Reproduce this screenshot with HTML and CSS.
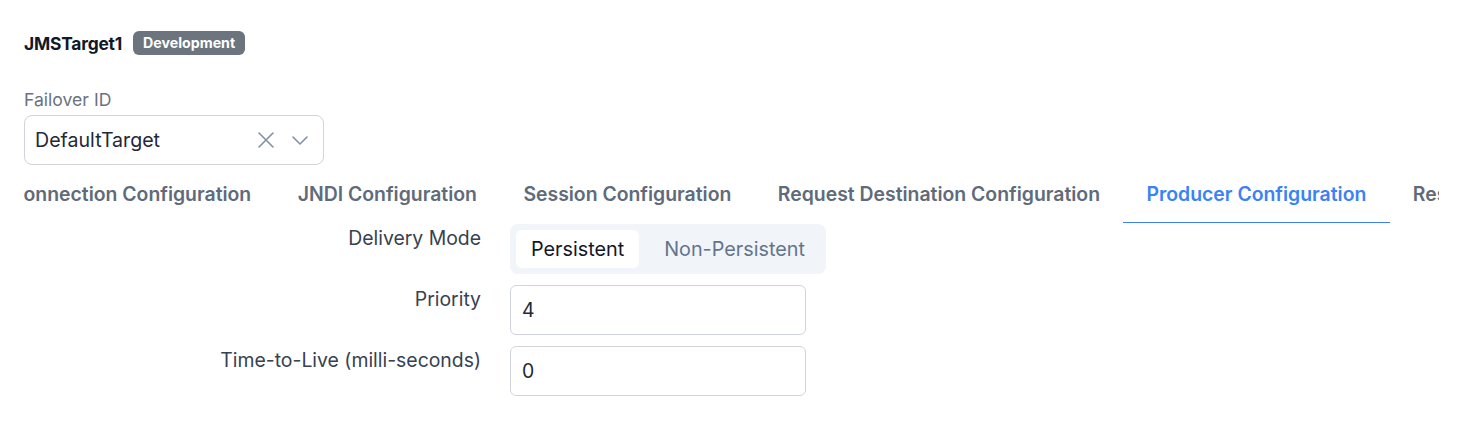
FILE: index.html
```html
<!DOCTYPE html>
<html lang="en">
<head>
<meta charset="utf-8">
<title>JMSTarget1</title>
<link rel="stylesheet" href="styles.css">
</head>
<body>
<div class="page">
  <div class="header">
    <span class="title">JMSTarget1</span>
    <span class="badge">Development</span>
  </div>

  <div class="field">
    <label class="field-label">Failover ID</label>
    <div class="select">
      <span class="select-value">DefaultTarget</span>
      <span class="select-icons">
        <svg class="icon-x" width="18" height="18" viewBox="0 0 18 18"><path d="M2 2 L16 16 M16 2 L2 16" stroke="#8391a7" stroke-width="1.6" fill="none" stroke-linecap="round"/></svg>
        <svg class="icon-chevron" width="18" height="18" viewBox="0 0 18 18"><path d="M2 6 L9 13 L16 6" stroke="#8391a7" stroke-width="1.6" fill="none" stroke-linecap="round" stroke-linejoin="round"/></svg>
      </span>
    </div>
  </div>

  <div class="tabs">
    <div class="tab-strip">
      <div class="tab">Connection Configuration</div>
      <div class="tab">JNDI Configuration</div>
      <div class="tab">Session Configuration</div>
      <div class="tab">Request Destination Configuration</div>
      <div class="tab active">Producer Configuration</div>
      <div class="tab">Response Destination Configuration</div>
    </div>
  </div>

  <div class="form">
    <div class="row">
      <div class="row-label">Delivery Mode</div>
      <div class="segmented">
        <span class="seg active">Persistent</span>
        <span class="seg">Non-Persistent</span>
      </div>
    </div>
    <div class="row">
      <div class="row-label">Priority</div>
      <div class="input">4</div>
    </div>
    <div class="row">
      <div class="row-label">Time-to-Live (milli-seconds)</div>
      <div class="input">0</div>
    </div>
  </div>
</div>
</body>
</html>
```

FILE: styles.css
```css
* { box-sizing: border-box; }
html, body { margin: 0; padding: 0; background: #fff; }
body { font-family: Inter, "Noto Sans", sans-serif; color: #1f2937; }

.page { padding: 30px 24px 0 24px; }

.header { display: flex; align-items: center; gap: 11px; height: 26px; }
.title { font-size: 17.4px; font-weight: 700; color: #111827; letter-spacing: -0.2px; }
.badge {
  background: #6c757d; color: #fff; font-size: 14.2px; font-weight: 700;
  border-radius: 6px; padding: 2px 10px; line-height: 20px;
}

.field { margin-top: 33px; }
.field-label { display: block; font-size: 17.6px; color: #6b7280; line-height: 22px; margin-bottom: 4px; }
.select {
  width: 300px; height: 50px; border: 1px solid #d1d5db; border-radius: 8px;
  display: flex; align-items: center; justify-content: space-between;
  padding: 0 14px 0 10px;
}
.select-value { font-size: 19.6px; color: #1f2937; }
.select-icons { display: flex; align-items: center; gap: 16px; }

.tabs { width: 1415px; overflow: hidden; margin-top: 5px; }
.tab-strip { display: flex; margin-left: -38px; }
.tab {
  flex: none; font-size: 19.4px; font-weight: 600; color: #5f6b7a;
  padding: 11px 23.25px 15px 23.25px; line-height: 26px; border-bottom: 1px solid transparent;
  white-space: nowrap;
}
.tab.active { color: #3b82f6; border-bottom-color: #3b82f6; }

.form { display: flex; flex-direction: column; gap: 11px; margin-top: 1px; }
.row { display: grid; grid-template-columns: 457px auto; column-gap: 29px; align-items: start; }
.row-label { text-align: right; font-size: 19.4px; color: #374151; line-height: 26px; padding-top: 1px; }
.segmented {
  justify-self: start; display: flex; gap: 10px; background: #f1f5f9; border-radius: 8px;
  padding: 6px; height: 50px;
}
.seg { font-size: 19.8px; color: #64748b; padding: 0 15px; display: flex; align-items: center; border-radius: 6px; }
.seg.active { background: #fff; color: #111827; }
.input {
  justify-self: start; width: 296px; height: 50px; border: 1px solid #d1d5db; border-radius: 6px;
  font-size: 19.4px; color: #1f2937; display: flex; align-items: center; padding: 0 11px;
}
```
